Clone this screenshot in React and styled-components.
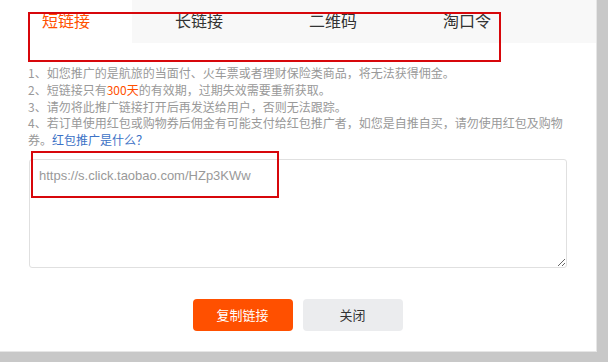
import React from 'react'
import styled, { createGlobalStyle } from 'styled-components'

const Global = createGlobalStyle`
html,body{
margin:0;
padding:0;
background:#c8c8c8;
}
body{
width:608px;
height:362px;
overflow:hidden;
font-family:"Noto Sans CJK SC","Microsoft YaHei",sans-serif;
}
`

const Dialog = styled.div`
position:relative;
width:596px;
height:351px;
background:#fff;
border-right:1px solid #e6e6e6;
border-bottom:1px solid #e6e6e6;
display:flex;
flex-direction:column;
`

const TabBar = styled.div`
display:flex;
height:43px;
background:#f8f8f8;
`

const Tab = styled.div`
width:${p => p.w}px;
height:43px;
display:flex;
justify-content:center;
padding-top:9px;
box-sizing:border-box;
font-size:16px;
line-height:22px;
color:${p => (p.active ? '#ff5000' : '#333')};
background:${p => (p.active ? '#fff' : 'transparent')};
`

const Body = styled.div`
padding:0 29px 0 28px;
display:flex;
flex-direction:column;
`

const Notice = styled.div`
margin-top:22px;
font-size:12px;
line-height:16.8px;
color:#999;
`

const Hot = styled.span`
color:#ff5000;
`

const Link = styled.a`
color:#3c72c6;
text-decoration:none;
`

const LinkBox = styled.textarea`
margin:10px 0 0 1px;
width:538px;
height:109px;
box-sizing:border-box;
border:1px solid #e0e0e0;
border-radius:3px;
padding:7px 9px;
font-family:"Liberation Sans",Arial,sans-serif;
font-size:13px;
line-height:18px;
color:#999;
outline:none;
`

const Actions = styled.div`
display:flex;
justify-content:center;
gap:10px;
margin-top:31px;
`

const Button = styled.button`
width:100px;
height:32px;
border:none;
border-radius:4px;
font-family:"Noto Sans CJK SC","Microsoft YaHei",sans-serif;
font-size:13px;
background:${p => (p.primary ? '#ff5000' : '#ebecee')};
color:${p => (p.primary ? '#fff' : '#333')};
`

const Mark = styled.div`
position:absolute;
left:${p => p.x}px;
top:${p => p.y}px;
width:${p => p.w}px;
height:${p => p.h}px;
border:2px solid #d7070b;
box-sizing:border-box;
pointer-events:none;
`

const tabs = [
  { label: '短链接', w: 132, active: true },
  { label: '长链接', w: 134 },
  { label: '二维码', w: 134 },
  { label: '淘口令', w: 134 },
]

export default function App() {
  return (
    <>
      <Global />
      <Dialog>
        <TabBar>
          {tabs.map(t => (
            <Tab key={t.label} w={t.w} active={t.active}>{t.label}</Tab>
          ))}
        </TabBar>
        <Body>
          <Notice>
            1、如您推广的是航旅的当面付、火车票或者理财保险类商品，将无法获得佣金。<br />
            2、短链接只有<Hot>300天</Hot>的有效期，过期失效需要重新获取。<br />
            3、请勿将此推广链接打开后再发送给用户，否则无法跟踪。<br />
            4、若订单使用红包或购物券后佣金有可能支付给红包推广者，如您是自推自买，请勿使用红包及购物券。<Link href="#">红包推广是什么？</Link>
          </Notice>
          <LinkBox readOnly defaultValue="https://s.click.taobao.com/HZp3KWw" />
          <Actions>
            <Button primary>复制链接</Button>
            <Button>关闭</Button>
          </Actions>
        </Body>
        <Mark x={28} y={12} w={473} h={50} />
        <Mark x={31} y={151} w={248} h={47} />
      </Dialog>
    </>
  )
}
